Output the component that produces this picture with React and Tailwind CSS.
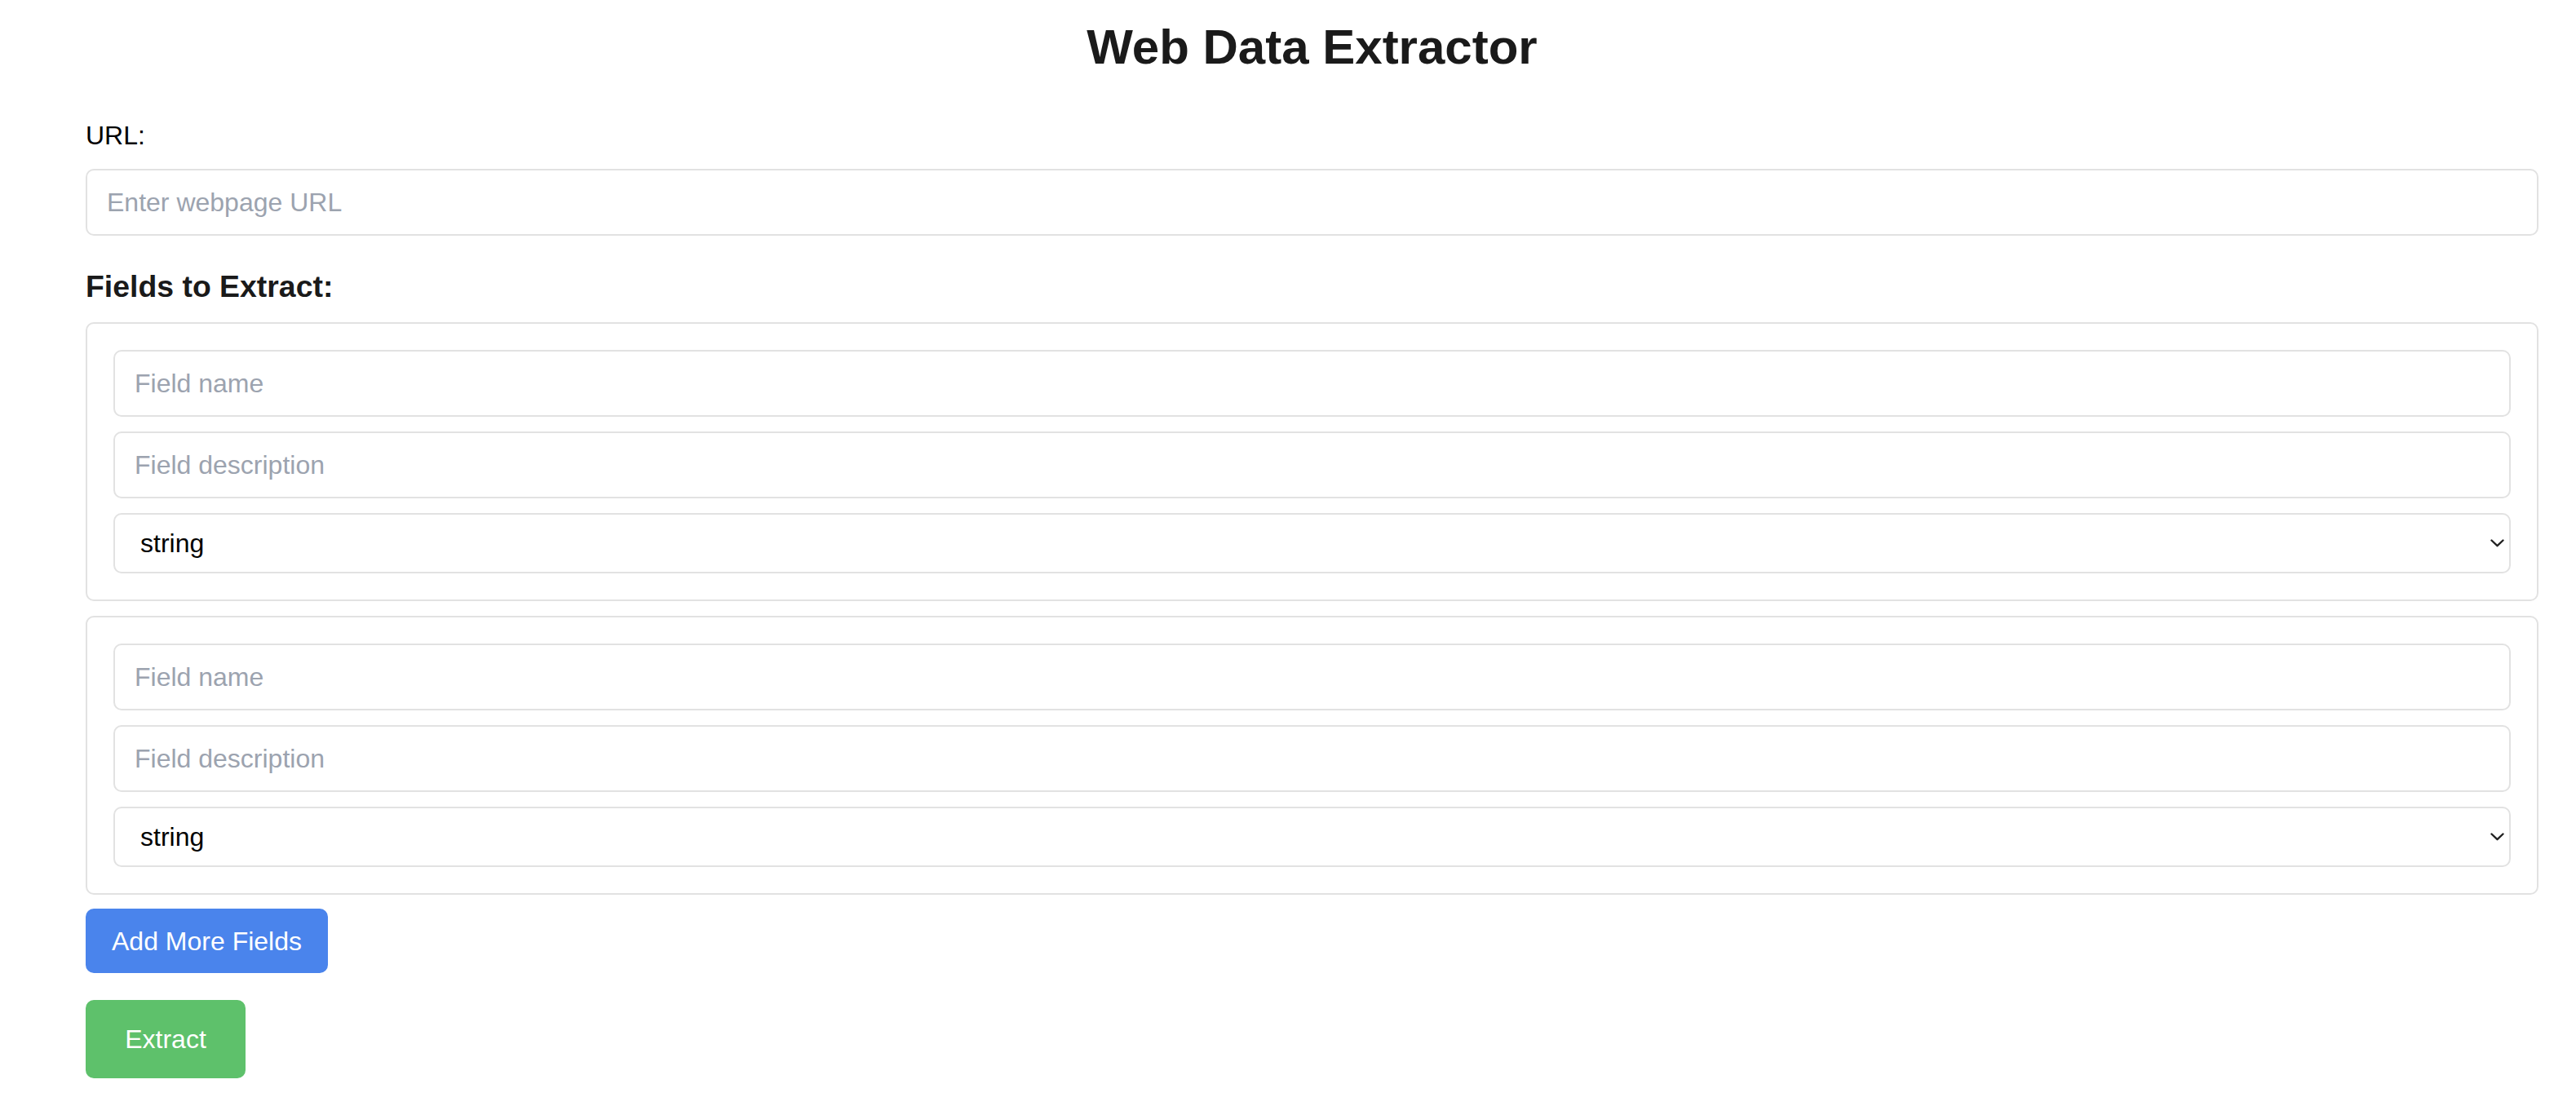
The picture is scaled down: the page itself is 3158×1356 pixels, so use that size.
import { useState } from 'react';

function FieldCard({ field, onChange }) {
  return (
    <div className="flex flex-col gap-[18px] rounded-[10px] border-2 border-[#e2e2e2] bg-white p-[32px]">
      <input
        type="text"
        placeholder="Field name"
        value={field.name}
        onChange={e => onChange({ ...field, name: e.target.value })}
        className="h-[82px] w-full rounded-[10px] border-2 border-[#e2e2e2] bg-white px-[24px] text-[32px] text-[#111] outline-none placeholder:text-[#9ca3af]"
      />
      <input
        type="text"
        placeholder="Field description"
        value={field.description}
        onChange={e => onChange({ ...field, description: e.target.value })}
        className="h-[82px] w-full rounded-[10px] border-2 border-[#e2e2e2] bg-white px-[24px] text-[32px] text-[#111] outline-none placeholder:text-[#9ca3af]"
      />
      <div className="relative">
        <select
          value={field.type}
          onChange={e => onChange({ ...field, type: e.target.value })}
          className="h-[74px] w-full appearance-none rounded-[10px] border-2 border-[#e2e2e2] bg-white pl-[31px] pr-[48px] text-[32px] text-black outline-none"
        >
          <option value="string">string</option>
          <option value="number">number</option>
          <option value="boolean">boolean</option>
          <option value="array">array</option>
        </select>
        {/* native-looking chevron */}
        <svg
          className="pointer-events-none absolute right-[8px] top-1/2 -translate-y-1/2"
          width="17"
          height="10"
          viewBox="0 0 17 10"
          fill="none"
        >
          <path d="M1.5 1.5 L8.5 8.2 L15.5 1.5" stroke="#222" strokeWidth="2.4" strokeLinecap="round" strokeLinejoin="round" />
        </svg>
      </div>
    </div>
  );
}

export default function App() {
  const [url, setUrl] = useState('');
  const [fields, setFields] = useState([
    { name: '', description: '', type: 'string' },
    { name: '', description: '', type: 'string' },
  ]);

  const updateField = (i, next) => {
    setFields(prev => prev.map((f, idx) => (idx === i ? next : f)));
  };

  const addField = () => {
    setFields(prev => [...prev, { name: '', description: '', type: 'string' }]);
  };

  return (
    <div className="min-h-screen bg-white font-['Liberation_Sans',Arial,sans-serif] text-[32px] text-[#1a1a1a]">
      <div className="ml-[105px] w-[3007px] pt-[23px] pb-[40px]">
        <h1 className="text-center text-[60px] font-bold leading-[69px] text-[#1a1a1a]">Web Data Extractor</h1>

        <label className="mt-[56px] block leading-[37px] text-black">URL:</label>
        <input
          type="text"
          placeholder="Enter webpage URL"
          value={url}
          onChange={e => setUrl(e.target.value)}
          className="mt-[22px] h-[82px] w-full rounded-[10px] border-2 border-[#e2e2e2] bg-white px-[24px] text-[32px] text-[#111] outline-none placeholder:text-[#9ca3af]"
        />

        <h3 className="mt-[41px] text-[37.4px] font-bold leading-[43px] text-[#1a1a1a]">Fields to Extract:</h3>

        <div className="mt-[22px] flex flex-col gap-[18px]">
          {fields.map((field, i) => (
            <FieldCard key={i} field={field} onChange={next => updateField(i, next)} />
          ))}
        </div>

        <button
          onClick={addField}
          className="mt-[17px] flex h-[79px] w-[297px] items-center justify-center rounded-[10px] bg-[#4a84ec] text-[32px] text-white"
        >
          Add More Fields
        </button>

        <button className="mt-[33px] flex h-[96px] w-[196px] items-center justify-center rounded-[10px] bg-[#5ec16b] text-[32px] text-white">
          Extract
        </button>
      </div>
    </div>
  );
}
